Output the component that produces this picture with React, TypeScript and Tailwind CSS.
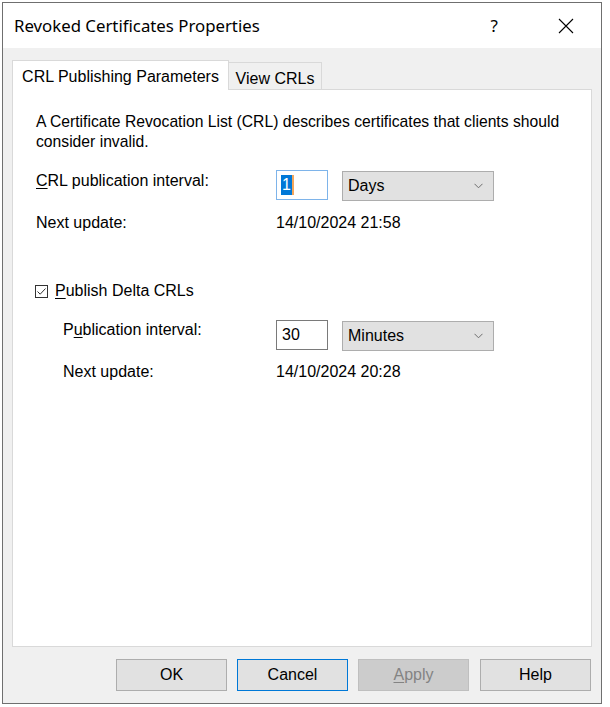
import React from "react";

const Chevron = () => (
  <svg width="9" height="6" viewBox="0 0 9 6" className="block">
    <path d="M0.5 0.8 L4.5 4.8 L8.5 0.8" fill="none" stroke="#6d6d6d" strokeWidth="1" />
  </svg>
);

const Combo = ({ label }: { label: string }) => (
  <div className="ml-[14px] mt-[1px] flex h-[30px] w-[152px] items-center justify-between border border-[#adadad] bg-[#e1e1e1] pl-[5px] pr-[10px]">
    <span>{label}</span>
    <Chevron />
  </div>
);

export default function App() {
  return (
    <div className="h-[707px] w-[610px] bg-white" style={{ fontFamily: '"Liberation Sans", Arial, sans-serif' }}>
      <div className="ml-[2px] pt-[2px]">
        <div className="flex h-[702px] w-[600px] flex-col border border-[#6f6f6f] bg-[#f0f0f0] text-[16px] text-black">
          {/* Title bar */}
          <div className="flex h-[45px] shrink-0 items-center bg-white">
            <span className="ml-[11px] text-[16.8px] text-black" style={{ fontFamily: '"Noto Sans", "Open Sans", sans-serif' }}>
              Revoked Certificates Properties
            </span>
            <span className="ml-auto mr-[60px] text-[17px] text-black" style={{ fontFamily: '"Noto Sans", sans-serif' }}>?</span>
            <svg width="16" height="16" viewBox="0 0 16 16" className="mr-[27px]">
              <path d="M1 1 L15 15 M15 1 L1 15" stroke="#000" strokeWidth="1.1" fill="none" />
            </svg>
          </div>
          {/* Body */}
          <div className="flex flex-1 flex-col pl-[9px] pt-[12px]">
            {/* Tabs */}
            <div className="relative z-10 flex h-[29px] items-end">
              <div className="flex h-[30px] w-[217px] items-start justify-center border border-b-0 border-[#d9d9d9] bg-white pt-[4px] -mb-[1px]">
                CRL Publishing Parameters
              </div>
              <div className="flex h-[27px] w-[93px] items-start justify-center border border-l-0 border-[#d9d9d9] border-b-0 bg-[#f0f0f0] pt-[4px]">
                View CRLs
              </div>
            </div>
            {/* Panel */}
            <div className="h-[558px] w-[580px] border border-[#d9d9d9] bg-white pl-[23px] pt-[22px]">
              <p className="w-[545px] text-[15.7px] leading-[20px]">
                A Certificate Revocation List (CRL) describes certificates that clients should consider invalid.
              </p>
              <div className="mt-[18px] flex items-start">
                <div className="w-[240px] pt-[1px] leading-[20px]">
                  <span className="underline underline-offset-2">C</span>RL publication interval:
                </div>
                <div className="flex h-[30px] w-[52px] items-center border border-[#7eb4ea] bg-white pl-[4px]">
                  <span className="relative bg-[#0078d7] px-[1px] leading-[20px] text-white">1</span>
                  <span className="h-[20px] w-[2px] bg-[#f5a65b]" />
                </div>
                <Combo label="Days" />
              </div>
              <div className="mt-[12px] flex leading-[20px]">
                <div className="w-[240px]">Next update:</div>
                <div>14/10/2024 21:58</div>
              </div>
              <div className="mt-[48px] flex items-center leading-[20px]">
                <div className="ml-[-1px] flex h-[13px] w-[13px] items-center justify-center border border-[#333333] bg-white">
                  <svg width="11" height="11" viewBox="0 0 11 11">
                    <path d="M1.5 5.5 L4.2 8.2 L9.5 2.5" fill="none" stroke="#333" strokeWidth="1" />
                  </svg>
                </div>
                <span className="ml-[7px]">
                  <span className="underline underline-offset-2">P</span>ublish Delta CRLs
                </span>
              </div>
              <div className="mt-[19px] flex items-start">
                <div className="ml-[27px] w-[213px] leading-[20px]">
                  P<span className="underline underline-offset-2">u</span>blication interval:
                </div>
                <div className="flex h-[30px] w-[52px] items-center border border-[#7a7a7a] bg-white pl-[5px] leading-[20px]">
                  30
                </div>
                <Combo label="Minutes" />
              </div>
              <div className="mt-[11px] flex leading-[20px]">
                <div className="ml-[27px] w-[213px]">Next update:</div>
                <div>14/10/2024 20:28</div>
              </div>
            </div>
            {/* Buttons */}
            <div className="mt-[12px] flex h-[32px] gap-[10px] pl-[104px]">
              <div className="flex w-[111px] items-center justify-center border border-[#adadad] bg-[#e1e1e1]">OK</div>
              <div className="flex w-[111px] items-center justify-center border border-[#0078d7] bg-[#e1e1e1]">Cancel</div>
              <div className="flex w-[111px] items-center justify-center border border-[#bfbfbf] bg-[#cccccc] text-[#838383]">
                <span>
                  <span className="underline underline-offset-2">A</span>pply
                </span>
              </div>
              <div className="ml-[1px] flex w-[111px] items-center justify-center border border-[#adadad] bg-[#e1e1e1]">Help</div>
            </div>
          </div>
        </div>
      </div>
    </div>
  );
}
